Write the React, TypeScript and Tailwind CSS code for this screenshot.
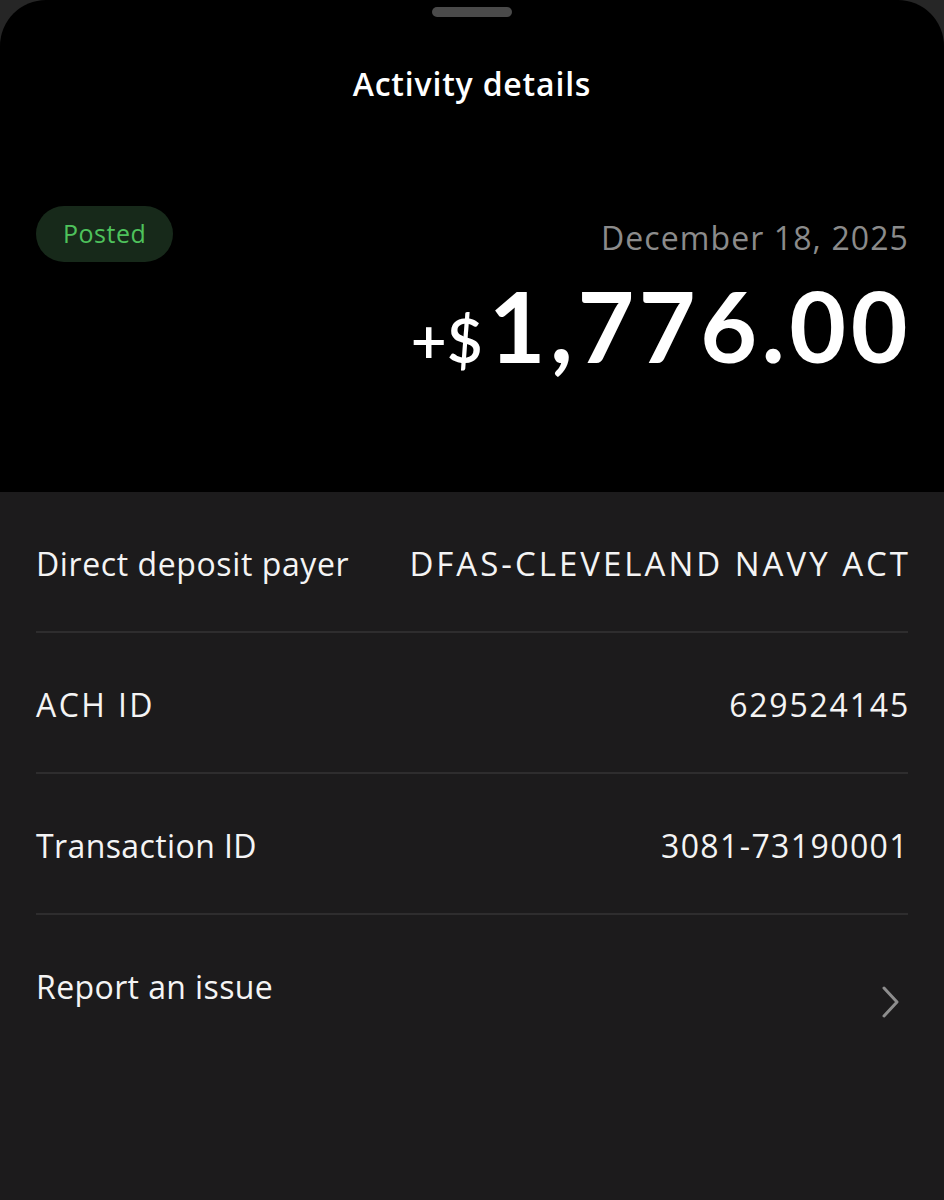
import React from "react";

const font = { fontFamily: "'Open Sans', Lato, sans-serif" };

function Row({
  label,
  value,
  labelCls = "tracking-[0.4px]",
  valueCls,
}: {
  label: string;
  value: string;
  labelCls?: string;
  valueCls: string;
}) {
  return (
    <div className="flex items-center justify-between h-[141px] border-b-2 border-[#2e2d2e]">
      <span className={"text-[32px] text-[#f4f4f4] leading-[40px] pt-[4px] " + labelCls}>{label}</span>
      <span className={"text-[#f4f4f4] leading-[40px] pt-[4px] " + valueCls}>{value}</span>
    </div>
  );
}

export default function App() {
  return (
    <div className="w-[944px] h-[1200px] bg-[#1c1b1c] overflow-hidden flex flex-col" style={font}>
      <div className="bg-[#262626]">
        <div className="bg-black rounded-t-[46px] h-[492px] flex flex-col">
          <div className="flex justify-center pt-[7px]">
            <div className="w-[80px] h-[10px] rounded-full bg-[#4a4a4a]" />
          </div>
          <div className="text-center mt-[47px] text-[32px] font-semibold text-white leading-[40px] tracking-[0.8px]">
            Activity details
          </div>
          <div className="flex justify-between items-start px-[36px] mt-[81px]">
            <div className="h-[56px] mt-[21px] px-[27px] rounded-full bg-[#17291a] flex items-center text-[25px] text-[#4ec25c] font-medium tracking-[0.5px]">
              Posted
            </div>
            <div className="flex flex-col items-end">
              <div className="text-[32px] text-[#8b8b8b] leading-[40px] mt-[33px] tracking-[1.1px] mr-[-1px]">December 18, 2025</div>
              <div className="flex items-baseline text-white font-bold leading-none mt-[18px]" style={{ fontFamily: "Lato, sans-serif" }}>
                <span className="text-[62px] mr-[6px] font-semibold">+$</span>
                <span className="text-[98px] tracking-[4.5px] mr-[-4px]">1,776.00</span>
              </div>
            </div>
          </div>
        </div>
      </div>
      <div className="px-[36px] flex flex-col">
        <Row
          label="Direct deposit payer"
          labelCls="tracking-[0.6px]"
          value="DFAS-CLEVELAND NAVY ACT"
          valueCls="text-[33px] tracking-[3px] mr-[-3px]"
        />
        <Row
          label="ACH ID"
          labelCls="tracking-[2.4px]"
          value="629524145"
          valueCls="text-[32px] tracking-[1.8px] mr-[-2px]"
        />
        <Row label="Transaction ID" value="3081-73190001" valueCls="text-[32px] tracking-[1.4px] mr-[-1px]" />
        <div className="flex items-start justify-between pt-[48px]">
          <span className="text-[32px] text-[#f4f4f4] tracking-[0.4px] leading-[40px] pt-[4px]">Report an issue</span>
          <svg width="22" height="34" viewBox="0 0 22 34" className="mt-[22px] mr-[6px]">
            <path d="M4 3 L17 17 L4 31" fill="none" stroke="#8d8d8d" strokeWidth="3" strokeLinecap="round" strokeLinejoin="round" />
          </svg>
        </div>
      </div>
    </div>
  );
}
